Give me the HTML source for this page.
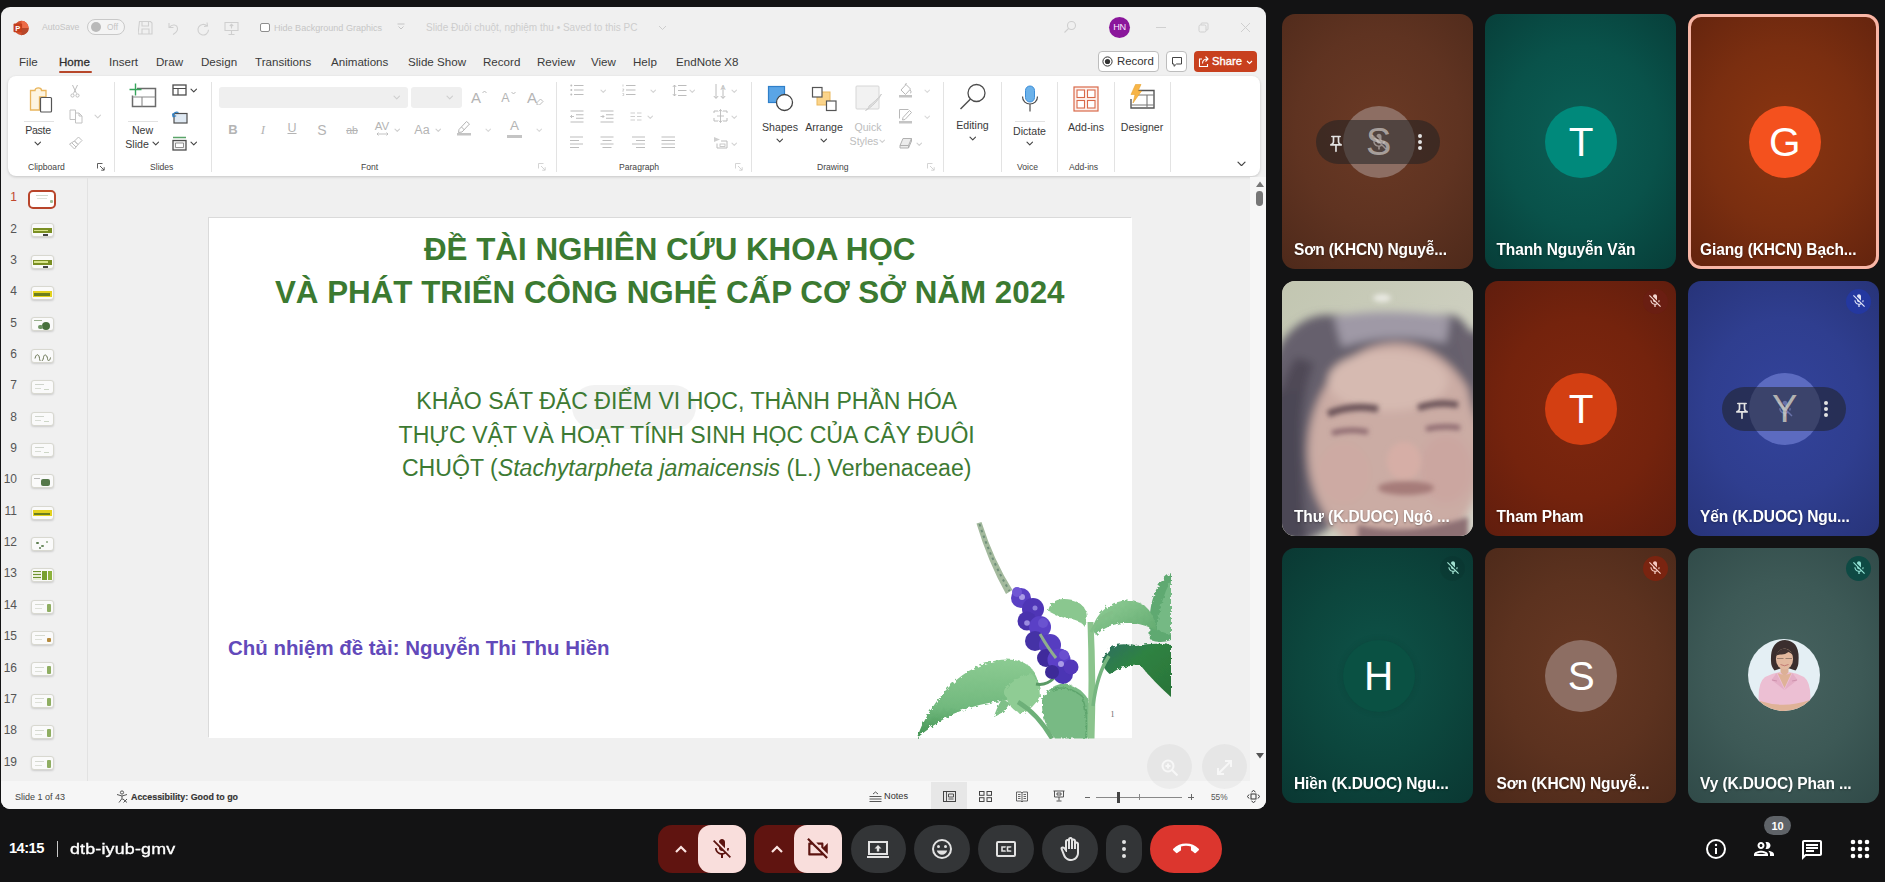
<!DOCTYPE html>
<html lang="vi"><head><meta charset="utf-8"><title>Meet</title>
<style>
*{box-sizing:border-box;margin:0;padding:0}
html,body{width:1885px;height:882px;overflow:hidden;background:#131314;font-family:"Liberation Sans",sans-serif}
.abs,.abs *{position:absolute}
#root{position:absolute;left:0;top:0;width:1885px;height:882px;overflow:hidden}
#root div,#root span,#root svg{position:absolute}
.t{white-space:nowrap;line-height:1}
#ppt{left:1px;top:7px;width:1265px;height:802px;background:#f0f0f0;border-radius:9px;overflow:hidden}
.tab{font-size:11.6px;color:#3a3a3a;top:49px;white-space:nowrap;line-height:1}
.gl{font-size:8.6px;color:#444;top:155.5px;white-space:nowrap;line-height:1}
.sep{width:1px;top:75px;height:90px;background:#e3e3e3}
.lbl{font-size:10.6px;color:#3a3a3a;white-space:nowrap;line-height:1;text-align:center}
.dis{color:#bdbdbd}
.tile{width:191.2px;height:255px;border-radius:13px;overflow:hidden}
.nm{left:12px;top:226.3px;transform:scaleY(1.12);transform-origin:0 0;font-size:15.5px;font-weight:bold;color:#fff;white-space:nowrap;line-height:1;text-shadow:0 1px 2px rgba(0,0,0,.35);letter-spacing:-0.1px}
.av{left:60.7px;top:92px;width:72px;height:72px;border-radius:50%}
.avl{left:0;top:0;width:72px;height:72px;line-height:73px;text-align:center;color:#fff;font-size:40.5px}
.num{font-size:12px;color:#555;width:20px;text-align:right;left:-4px;line-height:1}
.th{left:30px;width:23px;height:14px;border-radius:3px;background:#fafafa;border:1px solid #d8d8d0;overflow:hidden;box-shadow:0 1px 2px rgba(0,0,0,.15)}
.mb{top:825px;height:48px;border-radius:24px;background:#333537}
</style></head><body><div id="root">
<div id="ppt">
<svg style="left:11px;top:12px" width="18" height="18" viewBox="0 0 18 18"><circle cx="9.5" cy="9" r="7.2" fill="#d35230"/><path d="M9.5 1.8a7.2 7.2 0 0 1 7.2 7.2H9.5z" fill="#ed6c47"/><path d="M9.5 16.2A7.2 7.2 0 0 0 16.7 9H9.5z" fill="#b7472a"/><rect x="1.5" y="4.6" width="8.6" height="8.6" rx="1" fill="#c43e1c"/><text x="5.8" y="11.6" font-family="Liberation Sans,sans-serif" font-size="7.5" font-weight="bold" fill="#fff" text-anchor="middle">P</text></svg>
<span class="t" style="left:41px;top:16px;font-size:8.6px;color:#c4c4c4">AutoSave</span>
<div style="left:86px;top:12px;width:38px;height:16px;border:1px solid #c9c9c9;border-radius:8px;background:#f4f4f4"></div>
<div style="left:90px;top:15px;width:10px;height:10px;border-radius:5px;background:#b9b9b9"></div>
<span class="t" style="left:106px;top:16px;font-size:8.4px;color:#c4c4c4">Off</span>
<svg style="left:137px;top:12px" width="110" height="18" viewBox="0 0 110 18" fill="none" stroke="#cfcfcf" stroke-width="1.1">
 <path d="M1.5 2.5h11l1.5 1.5v11h-14z M4 2.5v4.5h6.5v-4.5 M4 15v-5h7v5"/>
 <path d="M31 4v4.5h4.5 M31.5 8.5c2-3.5 8-3.5 8 1.5 0 2.5-2 4-4.5 5.5"/>
 <path d="M69 3.5l0.5 3.5-3.5 0.5 M69 7a5.3 5.3 0 1 0 1.5 3.8"/>
 <path d="M87 3.5h13v8h-13z M93.5 11.5v3.5 M90.5 15.5h6 M93.5 5.5v4 M91.8 7l1.7-1.7 1.7 1.7"/>
</svg>
<div style="left:259px;top:15.5px;width:9.5px;height:9.5px;border:1px solid #8e8e8e;border-radius:2px;background:#fff"></div>
<span class="t" style="left:273px;top:16.5px;font-size:9.05px;color:#c6c6c6">Hide Background Graphics</span>
<svg style="left:395px;top:15px" width="10" height="10" viewBox="0 0 10 10" fill="none" stroke="#c4c4c4" stroke-width="1"><path d="M1.5 2h7 M2.5 4.5l2.5 2.5 2.5-2.5"/></svg>
<span class="t" style="left:425px;top:15.5px;font-size:10px;color:#cdcdcd">Slide Đuôi chuột, nghiệm thu • Saved to this PC</span>
<svg style="left:657px;top:17px" width="9" height="8" viewBox="0 0 9 8" fill="none" stroke="#cdcdcd" stroke-width="1"><path d="M1 2l3.5 3.5 3.5-3.5"/></svg>
<svg style="left:1062px;top:13px" width="14" height="14" viewBox="0 0 14 14" fill="none" stroke="#cfcfcf" stroke-width="1.1"><circle cx="8.5" cy="5.5" r="4"/><path d="M5.5 8.5l-4 4"/></svg>
<div style="left:1108px;top:10px;width:21px;height:21px;border-radius:50%;background:#8a169b"></div>
<span class="t" style="left:1108px;top:16px;width:21px;text-align:center;font-size:9.2px;color:#fbe9ff;letter-spacing:-.3px">HN</span>
<div style="left:1155px;top:20px;width:10px;height:1px;background:#d0d0d0"></div>
<svg style="left:1197px;top:15px" width="11" height="11" viewBox="0 0 11 11" fill="none" stroke="#d0d0d0" stroke-width="1"><rect x="1" y="3" width="7" height="7" rx="1.5"/><path d="M3 3v-1a1 1 0 0 1 1-1h5a1 1 0 0 1 1 1v5a1 1 0 0 1-1 1h-1"/></svg>
<svg style="left:1239px;top:15px" width="11" height="11" viewBox="0 0 11 11" fill="none" stroke="#cfcfcf" stroke-width="1"><path d="M1 1l9 9 M10 1l-9 9"/></svg>
<span class="tab" style="left:18px">File</span><span class="tab" style="left:58px;-webkit-text-stroke:.3px #333;color:#2a2a2a">Home</span><span class="tab" style="left:108px">Insert</span><span class="tab" style="left:155px">Draw</span><span class="tab" style="left:200px">Design</span><span class="tab" style="left:254px">Transitions</span><span class="tab" style="left:330px">Animations</span><span class="tab" style="left:407px">Slide Show</span><span class="tab" style="left:482px">Record</span><span class="tab" style="left:536px">Review</span><span class="tab" style="left:590px">View</span><span class="tab" style="left:632px">Help</span><span class="tab" style="left:675px">EndNote X8</span><div style="left:58px;top:64px;width:33px;height:2px;background:#b7472a;border-radius:1px"></div>
<div style="left:1097px;top:44px;width:61px;height:21px;border:1px solid #bdbdbd;border-radius:4px;background:#fff"></div>
<svg style="left:1101px;top:49px" width="11" height="11" viewBox="0 0 11 11"><circle cx="5.5" cy="5.5" r="4.6" fill="none" stroke="#333" stroke-width="1"/><circle cx="5.5" cy="5.5" r="2.6" fill="#333"/></svg>
<span class="t" style="left:1116px;top:49px;font-size:11.4px;color:#333">Record</span>
<div style="left:1165px;top:44px;width:21px;height:21px;border:1px solid #bdbdbd;border-radius:4px;background:#fff"></div>
<svg style="left:1170px;top:49px" width="12" height="12" viewBox="0 0 12 12" fill="none" stroke="#444" stroke-width="1"><path d="M1.5 1.5h9v6.5h-5l-2.5 2.3v-2.3h-1.5z"/></svg>
<div style="left:1193px;top:44px;width:63px;height:21px;border-radius:4px;background:#c8401e"></div>
<svg style="left:1197px;top:48px" width="12" height="13" viewBox="0 0 12 13" fill="none" stroke="#fff" stroke-width="1.1"><path d="M4 4h-2.5v7.5h8v-2.5 M4.5 8.5c0-3 2-4.5 5-4.5 M7.5 1.5l2.5 2.5-2.5 2.5"/></svg>
<span class="t" style="left:1211px;top:49px;font-size:11.2px;color:#fff;-webkit-text-stroke:.35px #fff">Share</span>
<svg style="left:1245px;top:52.5px" width="7" height="5" viewBox="0 0 7 5" fill="none" stroke="#fff" stroke-width="1.1"><path d="M1 1l2.5 2.5 2.5-2.5"/></svg>
<div style="left:7px;top:69px;width:1252px;height:100px;background:#fff;border-radius:8px;box-shadow:0 1px 3px rgba(0,0,0,.18)"></div><div class="sep" style="left:112.5px"></div><div class="sep" style="left:210px"></div><div class="sep" style="left:555px"></div><div class="sep" style="left:750px"></div><div class="sep" style="left:942px"></div><div class="sep" style="left:999.5px"></div><div class="sep" style="left:1056px"></div><div class="sep" style="left:1112.5px"></div><div class="sep" style="left:1169px"></div><span class="gl" style="left:27px">Clipboard</span><span class="gl" style="left:149px">Slides</span><span class="gl" style="left:360px">Font</span><span class="gl" style="left:618px">Paragraph</span><span class="gl" style="left:816px">Drawing</span><span class="gl" style="left:1016px">Voice</span><span class="gl" style="left:1068px">Add-ins</span><svg style="left:26.5px;top:78.5px" width="26" height="28" viewBox="0 0 26 28" ><path d="M2.5 4.5h4.5c0-3.5 6.5-3.5 6.5 0h4.5v6.5h-6.5v13h-9z" fill="#fdf4e0" stroke="#e9b55c" stroke-width="1.3"/><rect x="12.5" y="11.5" width="11" height="14.5" rx="1" fill="#fff" stroke="#555" stroke-width="1.2"/></svg><div style="left:23px;top:113.5px;width:30px;height:1px;background:#e2e2e2"></div><span class="lbl" style="left:-23px;top:118px;width:120px;letter-spacing:-.35px">Paste</span><svg style="left:33.2px;top:133.9px" width="7.5" height="5.15" viewBox="0 0 7.5 5.15" ><path d="M1 1.2l2.75 2.75 2.75 -2.75" fill="none" stroke="#444" stroke-width="1.1" stroke-linecap="round" stroke-linejoin="round"/></svg><svg style="left:69px;top:77px" width="10" height="14" viewBox="0 0 10 14" ><path d="M2.5 1l4 8.5 M7.5 1l-4 8.5" fill="none" stroke="#bdbdbd" stroke-width="1"/><circle cx="2.5" cy="11.5" r="1.6" fill="none" stroke="#bdbdbd"/><circle cx="7.5" cy="11.5" r="1.6" fill="none" stroke="#bdbdbd"/></svg><svg style="left:67.5px;top:102px" width="14" height="15" viewBox="0 0 14 15" ><path d="M1 1h5.5v9.5h-5.5z M6.5 4h3.5l3 3v7h-6.5z M10 4v3h3" fill="none" stroke="#c2c2c2" stroke-width="1"/></svg><svg style="left:93.2px;top:106.9px" width="7.5" height="5.15" viewBox="0 0 7.5 5.15" ><path d="M1 1.2l2.75 2.75 2.75 -2.75" fill="none" stroke="#d0d0d0" stroke-width="1.1" stroke-linecap="round" stroke-linejoin="round"/></svg><svg style="left:68px;top:129px" width="14" height="14" viewBox="0 0 14 14" ><path d="M9.5 1l3.5 3.5-4 4-3.5-3.5z M5.5 5l3.5 3.5-3.5 4.5-5-5z M3 7l4 4" fill="none" stroke="#bdbdbd" stroke-width="1"/></svg><svg style="left:95.5px;top:156px" width="8" height="8" viewBox="0 0 8 8" ><path d="M.5 5.5v-5h5 M3 3l4 4 M7.2 4.2v3h-3" fill="none" stroke="#4d4d4d" stroke-width=".9"/></svg><svg style="left:127.5px;top:76px" width="28" height="27" viewBox="0 0 28 27" ><path d="M8 5.5h18.5v18h-23v-11" fill="none" stroke="#6b6b6b" stroke-width="1.5"/><path d="M3.5 14h23 M13 14v9.5" fill="none" stroke="#8a8a8a" stroke-width="1.1"/><path d="M6.5 0.5v12 M0.5 6.5h12" stroke="#35a35a" stroke-width="1.4"/></svg><div style="left:127px;top:113.5px;width:30px;height:1px;background:#e2e2e2"></div><span class="lbl" style="left:81.5px;top:118px;width:120px;">New</span><span class="lbl" style="left:76px;top:132px;width:120px;">Slide</span><svg style="left:150.8px;top:133.9px" width="7.5" height="5.15" viewBox="0 0 7.5 5.15" ><path d="M1 1.2l2.75 2.75 2.75 -2.75" fill="none" stroke="#444" stroke-width="1.1" stroke-linecap="round" stroke-linejoin="round"/></svg><svg style="left:171px;top:77px" width="15" height="12" viewBox="0 0 15 12" ><rect x="1" y="1" width="13" height="10" fill="#fff" stroke="#4d4d4d" stroke-width="1.3"/><path d="M1 4.5h13 M6 4.5v6.5" stroke="#4d4d4d" stroke-width="1.1"/></svg><svg style="left:188.8px;top:81.4px" width="7.5" height="5.15" viewBox="0 0 7.5 5.15" ><path d="M1 1.2l2.75 2.75 2.75 -2.75" fill="none" stroke="#444" stroke-width="1.1" stroke-linecap="round" stroke-linejoin="round"/></svg><svg style="left:170.5px;top:102.5px" width="16" height="14" viewBox="0 0 16 14" ><rect x="2" y="3.5" width="13" height="9.5" fill="#dfe9f3" stroke="#4d4d4d" stroke-width="1.2"/><path d="M1 6.5c0-3.5 3-5 5.5-4" fill="none" stroke="#2f7fc4" stroke-width="1.3"/><path d="M0.5 3.5l0.7 3.3 3-1" fill="none" stroke="#2f7fc4" stroke-width="1.1"/></svg><svg style="left:171px;top:128.5px" width="15" height="15" viewBox="0 0 15 15" ><path d="M1 1.5h13" stroke="#5aa469" stroke-width="1.6"/><rect x="1" y="4.5" width="13" height="9.5" fill="#f2f2f2" stroke="#4d4d4d" stroke-width="1.3"/><path d="M3.5 7h8v4.5h-8z" fill="#fff" stroke="#777" stroke-width=".8"/></svg><svg style="left:188.8px;top:134.4px" width="7.5" height="5.15" viewBox="0 0 7.5 5.15" ><path d="M1 1.2l2.75 2.75 2.75 -2.75" fill="none" stroke="#444" stroke-width="1.1" stroke-linecap="round" stroke-linejoin="round"/></svg><div style="left:218px;top:80px;width:189px;height:21px;background:#efefef;border-radius:3px"></div><div style="left:410px;top:80px;width:51px;height:21px;background:#efefef;border-radius:3px"></div><svg style="left:392.2px;top:87.9px" width="7.5" height="5.15" viewBox="0 0 7.5 5.15" ><path d="M1 1.2l2.75 2.75 2.75 -2.75" fill="none" stroke="#cfcfcf" stroke-width="1.1" stroke-linecap="round" stroke-linejoin="round"/></svg><svg style="left:445.2px;top:87.9px" width="7.5" height="5.15" viewBox="0 0 7.5 5.15" ><path d="M1 1.2l2.75 2.75 2.75 -2.75" fill="none" stroke="#cfcfcf" stroke-width="1.1" stroke-linecap="round" stroke-linejoin="round"/></svg><span class="t" style="left:455px;top:82.5px;width:40px;text-align:center;font-size:15px;color:#b4b4b4;">A</span><svg style="left:481px;top:82.5px" width="5" height="4" viewBox="0 0 5 4" ><path d="M.5 3l2-2 2 2" fill="none" stroke="#b4b4b4" stroke-width=".9"/></svg><span class="t" style="left:484.5px;top:84.8px;width:40px;text-align:center;font-size:12.5px;color:#b4b4b4;">A</span><svg style="left:509.5px;top:83.5px" width="5" height="4" viewBox="0 0 5 4" ><path d="M.5 1l2 2 2-2" fill="none" stroke="#b4b4b4" stroke-width=".9"/></svg><span class="t" style="left:511px;top:82.5px;width:40px;text-align:center;font-size:15px;color:#b4b4b4;">A</span><svg style="left:535px;top:90.5px" width="8" height="7" viewBox="0 0 8 7" ><path d="M1 4.5l3.5-3.5 2.5 2.5-3.5 3.5h-2.5z" fill="none" stroke="#b4b4b4" stroke-width=".9"/></svg><span class="t" style="left:212px;top:115.5px;width:40px;text-align:center;font-size:13px;color:#b4b4b4;font-weight:bold">B</span><span class="t" style="left:242px;top:115.5px;width:40px;text-align:center;font-size:13px;color:#b4b4b4;font-style:italic;font-family:'Liberation Serif',serif">I</span><span class="t" style="left:271px;top:115.2px;width:40px;text-align:center;font-size:12.5px;color:#b4b4b4;text-decoration:underline">U</span><span class="t" style="left:301px;top:115.5px;width:40px;text-align:center;font-size:14px;color:#b4b4b4;">S</span><span class="t" style="left:331px;top:117.8px;width:40px;text-align:center;font-size:10.5px;color:#b4b4b4;text-decoration:line-through">ab</span><span class="t" style="left:361px;top:113.8px;width:40px;text-align:center;font-size:11.5px;color:#b4b4b4;">AV</span><svg style="left:374.5px;top:125px" width="13" height="4" viewBox="0 0 13 4" ><path d="M1 2h11 M2.5 .5l-1.5 1.5 1.5 1.5 M10.5 .5l1.5 1.5-1.5 1.5" fill="none" stroke="#b4b4b4" stroke-width=".8"/></svg><svg style="left:393.2px;top:120.7px" width="6.5" height="4.65" viewBox="0 0 6.5 4.65" ><path d="M1 1.2l2.25 2.25 2.25 -2.25" fill="none" stroke="#cfcfcf" stroke-width="1.1" stroke-linecap="round" stroke-linejoin="round"/></svg><span class="t" style="left:401px;top:116.8px;width:40px;text-align:center;font-size:12.5px;color:#b4b4b4;">Aa</span><svg style="left:433.8px;top:120.7px" width="6.5" height="4.65" viewBox="0 0 6.5 4.65" ><path d="M1 1.2l2.25 2.25 2.25 -2.25" fill="none" stroke="#cfcfcf" stroke-width="1.1" stroke-linecap="round" stroke-linejoin="round"/></svg><svg style="left:455px;top:112px" width="16" height="17" viewBox="0 0 16 17" ><path d="M3 10.5l7.5-8 3 2.5-7.5 8-3.5.5z M5.5 8l3 3" fill="none" stroke="#b4b4b4" stroke-width="1"/><rect x="1" y="14" width="14" height="2.5" fill="#c4c4c4"/></svg><svg style="left:483.8px;top:120.7px" width="6.5" height="4.65" viewBox="0 0 6.5 4.65" ><path d="M1 1.2l2.25 2.25 2.25 -2.25" fill="none" stroke="#d8d8d8" stroke-width="1.1" stroke-linecap="round" stroke-linejoin="round"/></svg><span class="t" style="left:493.5px;top:112.2px;width:40px;text-align:center;font-size:13.5px;color:#b4b4b4;">A</span><div style="left:506px;top:128px;width:15px;height:2.5px;background:#c4c4c4"></div><svg style="left:534.8px;top:120.7px" width="6.5" height="4.65" viewBox="0 0 6.5 4.65" ><path d="M1 1.2l2.25 2.25 2.25 -2.25" fill="none" stroke="#d8d8d8" stroke-width="1.1" stroke-linecap="round" stroke-linejoin="round"/></svg><svg style="left:536.5px;top:156px" width="8" height="8" viewBox="0 0 8 8" ><path d="M.5 5.5v-5h5 M3 3l4 4 M7.2 4.2v3h-3" fill="none" stroke="#cfcfcf" stroke-width=".9"/></svg><svg style="left:569px;top:77px" width="14" height="12" viewBox="0 0 14 12" ><path d="M4 1.5h9.5 M4 6h9.5 M4 10.5h9.5" stroke="#bcbcbc" stroke-width="1.1"/><circle cx="1.3" cy="1.5" r="1" fill="#bcbcbc"/><circle cx="1.3" cy="6" r="1" fill="#bcbcbc"/><circle cx="1.3" cy="10.5" r="1" fill="#bcbcbc"/></svg><svg style="left:598.8px;top:81.7px" width="6.5" height="4.65" viewBox="0 0 6.5 4.65" ><path d="M1 1.2l2.25 2.25 2.25 -2.25" fill="none" stroke="#d4d4d4" stroke-width="1.1" stroke-linecap="round" stroke-linejoin="round"/></svg><svg style="left:621px;top:77px" width="14" height="12" viewBox="0 0 14 12" ><path d="M4 1.5h9.5 M4 6h9.5 M4 10.5h9.5" stroke="#bcbcbc" stroke-width="1.1"/><path d="M1 .5v2 M.5 5h1.2v1l-1.2 1h1.4 M.5 9.5h1.2v2h-1.2" fill="none" stroke="#bcbcbc" stroke-width=".7"/></svg><svg style="left:648.8px;top:81.7px" width="6.5" height="4.65" viewBox="0 0 6.5 4.65" ><path d="M1 1.2l2.25 2.25 2.25 -2.25" fill="none" stroke="#d4d4d4" stroke-width="1.1" stroke-linecap="round" stroke-linejoin="round"/></svg><svg style="left:670.5px;top:76.5px" width="15" height="13" viewBox="0 0 15 13" ><path d="M6 1.5h8.5 M6 6.5h8.5 M6 11.5h8.5" stroke="#bcbcbc" stroke-width="1.1"/><path d="M2.5 1v11 M.8 3l1.7-2 1.7 2 M.8 10l1.7 2 1.7-2" fill="none" stroke="#bcbcbc" stroke-width=".9"/></svg><svg style="left:688.2px;top:81.7px" width="6.5" height="4.65" viewBox="0 0 6.5 4.65" ><path d="M1 1.2l2.25 2.25 2.25 -2.25" fill="none" stroke="#d4d4d4" stroke-width="1.1" stroke-linecap="round" stroke-linejoin="round"/></svg><svg style="left:712px;top:75.5px" width="14" height="17" viewBox="0 0 14 17" ><path d="M3 1v14 M.8 13l2.2 2.5 2.2-2.5 M10 3v12 M7.8 13l2.2 2.5 2.2-2.5" fill="none" stroke="#bcbcbc" stroke-width="1"/><text x="10" y="7" font-size="7.5" font-family="Liberation Sans,sans-serif" fill="#bcbcbc" text-anchor="middle">A</text></svg><svg style="left:729.8px;top:81.7px" width="6.5" height="4.65" viewBox="0 0 6.5 4.65" ><path d="M1 1.2l2.25 2.25 2.25 -2.25" fill="none" stroke="#d4d4d4" stroke-width="1.1" stroke-linecap="round" stroke-linejoin="round"/></svg><svg style="left:569px;top:102.5px" width="14" height="13" viewBox="0 0 14 13" ><path d="M.5 1h13 M6 4.7h7.5 M6 8.3h7.5 M.5 12h13" stroke="#bcbcbc" stroke-width="1.1"/><path d="M4 6.5h-3.5 M2 5l-1.5 1.5 1.5 1.5" fill="none" stroke="#bcbcbc" stroke-width=".9"/></svg><svg style="left:599px;top:102.5px" width="14" height="13" viewBox="0 0 14 13" ><path d="M.5 1h13 M6 4.7h7.5 M6 8.3h7.5 M.5 12h13" stroke="#bcbcbc" stroke-width="1.1"/><path d="M.5 6.5h3.5 M2.5 5l1.5 1.5-1.5 1.5" fill="none" stroke="#bcbcbc" stroke-width=".9"/></svg><svg style="left:629px;top:104.5px" width="12" height="9" viewBox="0 0 12 9" ><path d="M.5 1h4.5 M.5 4.5h4.5 M.5 8h4.5 M7 1h4.5 M7 4.5h4.5 M7 8h4.5" stroke="#cfcfcf" stroke-width="1"/></svg><svg style="left:645.8px;top:107.7px" width="6.5" height="4.65" viewBox="0 0 6.5 4.65" ><path d="M1 1.2l2.25 2.25 2.25 -2.25" fill="none" stroke="#d4d4d4" stroke-width="1.1" stroke-linecap="round" stroke-linejoin="round"/></svg><svg style="left:711.5px;top:102px" width="15" height="14" viewBox="0 0 15 14" ><path d="M1 4v-2h4 M10 2h4v2 M1 9v3h4 M10 12h4v-3" fill="none" stroke="#bcbcbc" stroke-width="1"/><path d="M7.5 .5v13 M5.8 2.5l1.7-2 1.7 2 M5.8 11.5l1.7 2 1.7-2 M4 7h7" fill="none" stroke="#bcbcbc" stroke-width=".9"/></svg><svg style="left:729.8px;top:107.7px" width="6.5" height="4.65" viewBox="0 0 6.5 4.65" ><path d="M1 1.2l2.25 2.25 2.25 -2.25" fill="none" stroke="#d4d4d4" stroke-width="1.1" stroke-linecap="round" stroke-linejoin="round"/></svg><svg style="left:568.5px;top:129.2px" width="15" height="12.5" viewBox="0 0 15 12.5" ><path d="M0 1H13M0 4.5H9M0 8H13M0 11.5H9" fill="none" stroke="#bdbdbd" stroke-width="1.1"/></svg><svg style="left:598.5px;top:129.2px" width="15" height="12.5" viewBox="0 0 15 12.5" ><path d="M0.5 1H13.5M2.5 4.5H11.5M0.5 8H13.5M2.5 11.5H11.5" fill="none" stroke="#bdbdbd" stroke-width="1.1"/></svg><svg style="left:629.5px;top:129.2px" width="15" height="12.5" viewBox="0 0 15 12.5" ><path d="M1 1H14M5 4.5H14M1 8H14M5 11.5H14" fill="none" stroke="#bdbdbd" stroke-width="1.1"/></svg><svg style="left:659.5px;top:129.2px" width="15" height="12.5" viewBox="0 0 15 12.5" ><path d="M0.5 1H14M0.5 4.5H14M0.5 8H14M0.5 11.5H14" fill="none" stroke="#bdbdbd" stroke-width="1.1"/></svg><svg style="left:711.5px;top:129px" width="15" height="13" viewBox="0 0 15 13" ><path d="M1 1l6 2.5-6 2.5z" fill="#cfcfcf"/><path d="M4 7.5v4.5h10v-7h-6" fill="none" stroke="#bcbcbc" stroke-width="1"/><rect x="7" y="8" width="5" height="2.5" fill="none" stroke="#bcbcbc" stroke-width=".8"/></svg><svg style="left:729.8px;top:134.7px" width="6.5" height="4.65" viewBox="0 0 6.5 4.65" ><path d="M1 1.2l2.25 2.25 2.25 -2.25" fill="none" stroke="#d4d4d4" stroke-width="1.1" stroke-linecap="round" stroke-linejoin="round"/></svg><svg style="left:733.5px;top:156px" width="8" height="8" viewBox="0 0 8 8" ><path d="M.5 5.5v-5h5 M3 3l4 4 M7.2 4.2v3h-3" fill="none" stroke="#cfcfcf" stroke-width=".9"/></svg><svg style="left:766px;top:77.5px" width="27" height="27" viewBox="0 0 27 27" ><rect x="1.5" y="1.5" width="16" height="16" fill="#5aa5e6" stroke="#2f7fc9" stroke-width="1.2"/><circle cx="17.5" cy="17.5" r="8" fill="#fff" stroke="#444" stroke-width="1.3"/></svg><span class="lbl" style="left:719px;top:114.5px;width:120px;">Shapes</span><svg style="left:775.2px;top:130.9px" width="7.5" height="5.15" viewBox="0 0 7.5 5.15" ><path d="M1 1.2l2.75 2.75 2.75 -2.75" fill="none" stroke="#444" stroke-width="1.1" stroke-linecap="round" stroke-linejoin="round"/></svg><svg style="left:809.5px;top:78.5px" width="27" height="26" viewBox="0 0 27 26" ><rect x="6" y="6" width="13" height="13" fill="#fbd48a" stroke="#eab75c" stroke-width="1"/><rect x="1.5" y="1.5" width="9.5" height="9.5" fill="#fff" stroke="#555" stroke-width="1.2"/><rect x="15.5" y="15" width="9.5" height="9.5" fill="#fff" stroke="#555" stroke-width="1.2"/></svg><span class="lbl" style="left:763px;top:114.5px;width:120px;">Arrange</span><svg style="left:819.2px;top:130.9px" width="7.5" height="5.15" viewBox="0 0 7.5 5.15" ><path d="M1 1.2l2.75 2.75 2.75 -2.75" fill="none" stroke="#444" stroke-width="1.1" stroke-linecap="round" stroke-linejoin="round"/></svg><svg style="left:854px;top:78px" width="28" height="27" viewBox="0 0 28 27" ><rect x="1" y="1" width="23" height="23" rx="1" fill="#f2f2f2" stroke="#d6d6d6" stroke-width="1"/><path d="M26.5 9c-3 6-8 11-12 14l-4 2.5c2-1 3-2.5 3.5-4.5 4-3 9-7.5 12.5-12z" fill="#e0e0e0" stroke="#c8c8c8" stroke-width=".8"/></svg><span class="lbl dis" style="left:807px;top:114.5px;width:120px;">Quick</span><span class="lbl dis" style="left:803px;top:129px;width:120px;">Styles</span><svg style="left:877.8px;top:131.7px" width="6.5" height="4.65" viewBox="0 0 6.5 4.65" ><path d="M1 1.2l2.25 2.25 2.25 -2.25" fill="none" stroke="#d0d0d0" stroke-width="1.1" stroke-linecap="round" stroke-linejoin="round"/></svg><svg style="left:897px;top:75px" width="15" height="16" viewBox="0 0 15 16" ><path d="M3 8l5-5.5 4.5 4.5-5 5.5z M8.5 1l-1.5 2 M12 8c1.5 1.5 1.5 3 0 3" fill="none" stroke="#b8b8b8" stroke-width="1"/><rect x="1" y="13" width="13" height="2.5" fill="#c4c4c4"/></svg><svg style="left:922.8px;top:81.7px" width="6.5" height="4.65" viewBox="0 0 6.5 4.65" ><path d="M1 1.2l2.25 2.25 2.25 -2.25" fill="none" stroke="#dadada" stroke-width="1.1" stroke-linecap="round" stroke-linejoin="round"/></svg><svg style="left:897px;top:101px" width="15" height="16" viewBox="0 0 15 16" ><path d="M1.5 10.5v-9h9 M5 9.5l6.5-7 2 2-6.5 7-2.5.500z" fill="none" stroke="#b8b8b8" stroke-width="1"/><rect x="1" y="13" width="13" height="2.5" fill="#c4c4c4"/></svg><svg style="left:922.8px;top:107.7px" width="6.5" height="4.65" viewBox="0 0 6.5 4.65" ><path d="M1 1.2l2.25 2.25 2.25 -2.25" fill="none" stroke="#dadada" stroke-width="1.1" stroke-linecap="round" stroke-linejoin="round"/></svg><svg style="left:896.5px;top:129.5px" width="15" height="13" viewBox="0 0 15 13" ><path d="M5 1.5h8.5l-3 7h-8.5z M2 8.5v2.5h8.5v-2.5 M10.5 11l3-7v-2.5" fill="#ececec" stroke="#b0b0b0" stroke-width="1" stroke-linejoin="round"/></svg><svg style="left:915.2px;top:134.7px" width="6.5" height="4.65" viewBox="0 0 6.5 4.65" ><path d="M1 1.2l2.25 2.25 2.25 -2.25" fill="none" stroke="#d0d0d0" stroke-width="1.1" stroke-linecap="round" stroke-linejoin="round"/></svg><svg style="left:925.5px;top:156px" width="8" height="8" viewBox="0 0 8 8" ><path d="M.5 5.5v-5h5 M3 3l4 4 M7.2 4.2v3h-3" fill="none" stroke="#cfcfcf" stroke-width=".9"/></svg><svg style="left:957.5px;top:75.5px" width="28" height="28" viewBox="0 0 28 28" ><circle cx="17.5" cy="10" r="8.5" fill="none" stroke="#4d4d4d" stroke-width="1.3"/><path d="M11.5 16l-10 10" stroke="#4d4d4d" stroke-width="1.5"/></svg><span class="lbl" style="left:911.5px;top:113px;width:120px;">Editing</span><svg style="left:967.8px;top:128.9px" width="7.5" height="5.15" viewBox="0 0 7.5 5.15" ><path d="M1 1.2l2.75 2.75 2.75 -2.75" fill="none" stroke="#444" stroke-width="1.1" stroke-linecap="round" stroke-linejoin="round"/></svg><svg style="left:1019.5px;top:77.5px" width="18" height="28" viewBox="0 0 18 28" ><rect x="4.5" y="1" width="9" height="16" rx="4.5" fill="#6cb2ea" stroke="#3d8ed8" stroke-width="1"/><path d="M1.5 11.5c0 10 15 10 15 0 M9 19v7.5" fill="none" stroke="#4d4d4d" stroke-width="1.2"/></svg><div style="left:1014px;top:113.5px;width:30px;height:1px;background:#e2e2e2"></div><span class="lbl" style="left:968.5px;top:118.5px;width:120px;">Dictate</span><svg style="left:1024.8px;top:133.9px" width="7.5" height="5.15" viewBox="0 0 7.5 5.15" ><path d="M1 1.2l2.75 2.75 2.75 -2.75" fill="none" stroke="#444" stroke-width="1.1" stroke-linecap="round" stroke-linejoin="round"/></svg><svg style="left:1071.5px;top:78.5px" width="26" height="26" viewBox="0 0 26 26" ><rect x="1" y="1" width="24" height="24" fill="#fdf1ed" stroke="#d9694a" stroke-width="1.2"/><g fill="#fff" stroke="#d9694a" stroke-width="1.1"><rect x="4" y="4" width="7.5" height="7.5"/><rect x="14.5" y="4" width="7.5" height="7.5"/><rect x="4" y="14.5" width="7.5" height="7.5"/><rect x="14.5" y="14.5" width="7.5" height="7.5"/></g></svg><span class="lbl" style="left:1025px;top:115px;width:120px;">Add-ins</span><svg style="left:1127px;top:77px" width="28" height="26" viewBox="0 0 28 26" ><path d="M9 6.5h17v17.5h-23v-9" fill="#fff" stroke="#555" stroke-width="1.4"/><path d="M9.5 11h16.5 M19 11v12.5 M3 21h23" fill="none" stroke="#777" stroke-width="1.1"/><path d="M7.5 .5h5.5l-3 6.5h3.5l-8.5 12 2-8.5h-4z" fill="#f7b548" stroke="#eaa22d" stroke-width=".6"/></svg><span class="lbl" style="left:1081px;top:115px;width:120px;">Designer</span><svg style="left:1236px;top:153.6px" width="9" height="5.9" viewBox="0 0 9 5.9" ><path d="M1 1.2l3.5 3.5 3.5 -3.5" fill="none" stroke="#444" stroke-width="1.2" stroke-linecap="round" stroke-linejoin="round"/></svg><div style="left:86px;top:170px;width:1px;height:604px;background:#e2e2e2"></div><span class="num" style="top:184.2px;color:#c1462c">1</span><div style="left:27px;top:183px;width:28px;height:18.5px;border-radius:5px;border:2px solid #b8452b;background:#fff"></div><div style="left:35px;top:188px;width:12px;height:1px;background:#cfd8cc"></div><div style="left:36px;top:191px;width:10px;height:1px;background:#dfe4dc"></div><div style="left:49px;top:193px;width:3px;height:3px;background:#9fbf96;border-radius:1px"></div><span class="num" style="top:215.5px;color:#555">2</span><div class="th" style="top:216.3px"><div style="left:1px;top:4px;width:19px;height:5px;background:#7a8f23"></div><div style="left:2px;top:5.5px;width:14px;height:1.5px;background:#d9e48a"></div><div style="left:11px;top:10px;width:5px;height:2px;background:#444"></div></div><span class="num" style="top:246.9px;color:#555">3</span><div class="th" style="top:247.7px"><div style="left:1px;top:4px;width:19px;height:5px;background:#7a8f23"></div><div style="left:2px;top:5.5px;width:14px;height:1.5px;background:#d9e48a"></div><div style="left:11px;top:10px;width:5px;height:2px;background:#444"></div></div><span class="num" style="top:278.2px;color:#555">4</span><div class="th" style="top:279.1px"><div style="left:1px;top:3.5px;width:19px;height:6px;background:#e3d21f"></div><div style="left:2px;top:6px;width:16px;height:2.5px;background:#6b7f1e"></div></div><span class="num" style="top:309.6px;color:#555">5</span><div class="th" style="top:310.4px"><div style="left:2px;top:2px;width:8px;height:1px;background:#9ab08f"></div><div style="left:10px;top:4px;width:8px;height:8px;border-radius:4px;background:#47703c"></div><div style="left:6px;top:7px;width:5px;height:4px;border-radius:2px;background:#6d9462"></div></div><span class="num" style="top:340.9px;color:#555">6</span><div class="th" style="top:341.8px"><svg style="left:2px;top:4px" width="18" height="7" viewBox="0 0 18 7"><path d="M1 4.5c1-5 4-5 4.5 0s3.5 3 4-1 3.5-3 4 1 2.5 2 3-1" fill="none" stroke="#66714f" stroke-width="1"/></svg></div><span class="num" style="top:372.3px;color:#555">7</span><div class="th" style="top:373.1px"><div style="left:3px;top:3px;width:9px;height:1px;background:#cfd4cc"></div><div style="left:3px;top:7px;width:6px;height:1px;background:#d8dcd4"></div><div style="left:12px;top:8px;width:5px;height:1px;background:#cdd6c6"></div></div><span class="num" style="top:403.7px;color:#555">8</span><div class="th" style="top:404.5px"><div style="left:3px;top:3px;width:9px;height:1px;background:#cfd4cc"></div><div style="left:3px;top:7px;width:6px;height:1px;background:#d8dcd4"></div><div style="left:12px;top:8px;width:5px;height:1px;background:#cdd6c6"></div></div><span class="num" style="top:435px;color:#555">9</span><div class="th" style="top:435.8px"><div style="left:3px;top:3px;width:9px;height:1px;background:#cfd4cc"></div><div style="left:3px;top:7px;width:6px;height:1px;background:#d8dcd4"></div><div style="left:12px;top:8px;width:5px;height:1px;background:#cdd6c6"></div></div><span class="num" style="top:466.4px;color:#555">10</span><div class="th" style="top:467.2px"><div style="left:9px;top:4px;width:9px;height:7px;border-radius:2px;background:#55784a"></div><div style="left:2px;top:3px;width:6px;height:1px;background:#bbb"></div></div><span class="num" style="top:497.7px;color:#555">11</span><div class="th" style="top:498.5px"><div style="left:1px;top:3.5px;width:19px;height:6px;background:#e3d21f"></div><div style="left:2px;top:6px;width:16px;height:2.5px;background:#6b7f1e"></div></div><span class="num" style="top:529.1px;color:#555">12</span><div class="th" style="top:529.9px"><div style="left:4px;top:4px;width:2.5px;height:2.5px;background:#5d7d50;border-radius:1px"></div><div style="left:9px;top:7px;width:2.5px;height:2.5px;background:#6d8d60;border-radius:1px"></div><div style="left:14px;top:3.5px;width:2px;height:2px;background:#8aa77e;border-radius:1px"></div><div style="left:7px;top:9.5px;width:2px;height:2px;background:#5d7d50;border-radius:1px"></div></div><span class="num" style="top:560.4px;color:#555">13</span><div class="th" style="top:561.2px"><div style="left:1px;top:2px;width:8px;height:9px;background:repeating-linear-gradient(#6f9431 0 1.5px,#e9efd8 1.5px 3px)"></div><div style="left:10px;top:2px;width:4.5px;height:9px;background:#78a02f"></div><div style="left:15.5px;top:2px;width:4.5px;height:9px;background:#8db23d"></div></div><span class="num" style="top:591.8px;color:#555">14</span><div class="th" style="top:592.5px"><div style="left:15px;top:3px;width:3.5px;height:8px;background:#8fae62;border-radius:1px"></div><div style="left:3px;top:3.5px;width:9px;height:1px;background:#d5d9d0"></div><div style="left:3px;top:7.5px;width:7px;height:1px;background:#dde0d8"></div></div><span class="num" style="top:623.1px;color:#555">15</span><div class="th" style="top:623.9px"><div style="left:15px;top:6px;width:3.5px;height:4.5px;background:#b58a3c;border-radius:1px"></div><div style="left:3px;top:3.5px;width:10px;height:1px;background:#d5d9d0"></div><div style="left:3px;top:7.5px;width:7px;height:1px;background:#dde0d8"></div></div><span class="num" style="top:654.5px;color:#555">16</span><div class="th" style="top:655.2px"><div style="left:15px;top:3px;width:3.5px;height:8px;background:#8fae62;border-radius:1px"></div><div style="left:3px;top:3.5px;width:9px;height:1px;background:#d5d9d0"></div><div style="left:3px;top:7.5px;width:7px;height:1px;background:#dde0d8"></div></div><span class="num" style="top:685.8px;color:#555">17</span><div class="th" style="top:686.6px"><div style="left:15px;top:3px;width:3.5px;height:8px;background:#8fae62;border-radius:1px"></div><div style="left:3px;top:3.5px;width:9px;height:1px;background:#d5d9d0"></div><div style="left:3px;top:7.5px;width:7px;height:1px;background:#dde0d8"></div></div><span class="num" style="top:717.2px;color:#555">18</span><div class="th" style="top:718px"><div style="left:15px;top:3px;width:3.5px;height:8px;background:#8fae62;border-radius:1px"></div><div style="left:3px;top:3.5px;width:9px;height:1px;background:#d5d9d0"></div><div style="left:3px;top:7.5px;width:7px;height:1px;background:#dde0d8"></div></div><span class="num" style="top:748.5px;color:#555">19</span><div class="th" style="top:749.3px"><div style="left:15px;top:3px;width:3.5px;height:8px;background:#8fae62;border-radius:1px"></div><div style="left:3px;top:3.5px;width:9px;height:1px;background:#d5d9d0"></div><div style="left:3px;top:7.5px;width:7px;height:1px;background:#dde0d8"></div></div><div id="slide" style="left:208px;top:211px;width:923px;height:520px;background:#fff;box-shadow:-1px -1px 0 #dadada;overflow:visible">
<div class="t" style="left:-0.8px;top:10px;width:923px;text-align:center;font-size:31.35px;font-weight:bold;color:#3b7a31;line-height:43px">ĐỀ TÀI NGHIÊN CỨU KHOA HỌC<br>VÀ PHÁT TRIỂN CÔNG NGHỆ CẤP CƠ SỞ NĂM 2024</div>
<div style="left:363px;top:167px;width:124px;height:44px;border-radius:22px;background:rgba(0,0,0,.05)"></div>
<div class="t" style="left:16.2px;top:167.4px;width:923px;text-align:center;font-size:23.1px;color:#3d7a33;line-height:33.25px">KHẢO SÁT ĐẶC ĐIỂM VI HỌC, THÀNH PHẦN HÓA<br>THỰC VẬT VÀ HOẠT TÍNH SINH HỌC CỦA CÂY ĐUÔI<br>CHUỘT (<i>Stachytarpheta jamaicensis</i> (L.) Verbenaceae)</div>
<div class="t" style="left:19px;top:420px;font-size:20.45px;font-weight:bold;color:#6249ba">Chủ nhiệm đề tài: Nguyễn Thi Thu Hiền</div>
<span class="t" style="left:901.5px;top:492.5px;font-size:8px;color:#666;font-family:'Liberation Serif',serif">1</span>
<svg style="left:701px;top:297px" width="262" height="224" viewBox="910 515 262 224">
<defs><filter id="rg" x="-5%" y="-5%" width="110%" height="110%"><feTurbulence type="fractalNoise" baseFrequency=".28" numOctaves="2" seed="4" result="n"/><feDisplacementMap in="SourceGraphic" in2="n" scale="4.5"/></filter>
<filter id="sb"><feGaussianBlur stdDeviation=".7"/></filter>
<linearGradient id="lg1" x1="0" y1="0" x2="0" y2="1"><stop offset="0" stop-color="#8ccb92"/><stop offset=".6" stop-color="#72b97e"/><stop offset="1" stop-color="#3f9150"/></linearGradient>
<linearGradient id="lg2" x1="0" y1="0" x2="1" y2="1"><stop offset="0" stop-color="#2c6f62"/><stop offset=".4" stop-color="#2f8242"/><stop offset="1" stop-color="#2a7438"/></linearGradient>
<linearGradient id="lg3" x1="0" y1="0" x2="1" y2="1"><stop offset="0" stop-color="#93cf98"/><stop offset="1" stop-color="#5fa86d"/></linearGradient></defs>
<g filter="url(#sb)">
<path d="M976.5 523.5l5-1.5q12 38 31 68l-6.5 4q-18-32-29.5-70.5z" fill="#a3b99d"/>
<path d="M979.5 524q12 37 30 67" fill="none" stroke="#70907a" stroke-width="2" stroke-dasharray="2.5 3.5"/>
<g filter="url(#rg)">
<path d="M1150 640q-3-30 6-50 6-12 15-17v67q-10 4-21 0z" fill="#5fa971"/>
<path d="M1157 630q2-28 14-50v55z" fill="#74b984"/>
<path d="M1102 662q4-13 14-17 10-2 20 1 18-4 35-1v52q-16-14-30-31-18-2-31 8-6-4-8-12z" fill="url(#lg2)"/>
<path d="M1092 630q4-18 22-27 16-6 30 2 10 8 13 26-10-6-24-8-22-2-37 12z" fill="url(#lg3)"/>
<path d="M1048 611q3-12 16-12 16 0 22 12 2 8-1 16-6-8-16-8-10-2-21-8z" fill="#8ac78f"/>
<path d="M916.5 738.5Q926 712 946 690Q968 666 996 660.5Q1018 657 1030 666.5Q1038 676 1040 690Q1024 699 1006 700.5Q978 703 953 714Q932 725 916.5 738.5Z" fill="url(#lg1)"/><path d="M1002 699q-6 10-8 18 10-4 16-14z" fill="#7fc088"/>
<path d="M1004 690q12-14 28-16 8 8 8 22-6 12-18 18-14-4-18-24z" fill="#8fcc94"/>
<path d="M1042 700q6-14 22-17 18 4 25 18 4 18 0 37.5h-34q-14-16-13-38.5z" fill="#78ba84"/>
<path d="M1052 690q14-6 30 6 6 16 4 42" fill="none" stroke="#5fa56d" stroke-width="1.5"/>
</g>
<path d="M1087.5 622q2 58 0 116.5h7q2-58-1-116.5z" fill="#8bc48d"/>
<path d="M1091 632q8-16 22-20" fill="none" stroke="#82bf88" stroke-width="3"/>
<path d="M1093 706q4-32 16-50" fill="none" stroke="#76b680" stroke-width="3.5"/>
<path d="M1018 702q20 12 34 36.5" fill="none" stroke="#6eb079" stroke-width="4.5"/>
<path d="M1036 684q10 2 18 -6" fill="none" stroke="#5a9a66" stroke-width="3"/>
<circle cx="1021" cy="598" r="10" fill="#5a3fc4"/><circle cx="1033" cy="609" r="11" fill="#4f35b6"/><circle cx="1027" cy="621" r="9.5" fill="#4a31ad"/><circle cx="1040" cy="627" r="11" fill="#5a40c6"/><circle cx="1035" cy="641" r="10" fill="#4530a6"/><circle cx="1050" cy="645" r="11" fill="#573cc0"/><circle cx="1046" cy="658" r="9" fill="#3f2b9c"/><circle cx="1059" cy="660" r="11.5" fill="#5b41c8"/><circle cx="1063" cy="674" r="10" fill="#4c34b4"/><circle cx="1071" cy="667" r="7.5" fill="#5238ba"/><circle cx="1052" cy="672" r="7" fill="#3d2a98"/><circle cx="1022" cy="597" r="3" fill="#a99be6"/><circle cx="1035" cy="608" r="2.5" fill="#8f80dc"/><circle cx="1027" cy="623" r="2.8" fill="#9a8be0"/><circle cx="1061" cy="664" r="3" fill="#a99be6"/><circle cx="1017" cy="592" r="5" fill="#6f56d4"/><circle cx="1043" cy="623" r="5" fill="#6b52d0"/><circle cx="1064" cy="655" r="5" fill="#6a50cf"/>
<path d="M1040 634q8 14 16 24" stroke="#8fae8c" stroke-width="3" fill="none"/>
</g></svg></div>
<div style="left:1248.5px;top:170px;width:17px;height:604px;background:#f6f6f6"></div>
<svg style="left:1254px;top:173px" width="10" height="8" viewBox="0 0 10 8"><path d="M1 7l4-5.5 4 5.5z" fill="#777"/></svg>
<div style="left:1255.2px;top:183.8px;width:6.8px;height:15px;border-radius:3.4px;background:#767676"></div>
<svg style="left:1253.5px;top:745px" width="10" height="8" viewBox="0 0 10 8"><path d="M1 1l4 5.5 4-5.5z" fill="#555"/></svg>
<div style="left:0;top:774px;width:1265px;height:28px;background:#f6f6f6"></div><span class="t" style="left:14px;top:785.5px;font-size:9px;color:#444">Slide 1 of 43</span><svg style="left:115px;top:783px" width="12" height="13" viewBox="0 0 12 13" ><circle cx="6" cy="2.5" r="1.6" fill="none" stroke="#444" stroke-width=".9"/><path d="M1 4.5l5 1.5 5-1.5 M6 6v2.5l-3 4 M6 8.5l1.5 1.5 M7 9l4 3.5 M7.5 12.5l3.5-3.5" fill="none" stroke="#444" stroke-width=".9"/></svg><span class="t" style="left:130px;top:785.5px;font-size:8.9px;font-weight:bold;color:#333;-webkit-text-stroke:.15px #333">Accessibility: Good to go</span><svg style="left:867.5px;top:783.5px" width="13" height="11" viewBox="0 0 13 11" ><path d="M4 3l2.5-2 2.5 2 M.5 5.5h12 M.5 8h12 M.5 10.5h12" fill="none" stroke="#444" stroke-width=".9"/></svg><span class="t" style="left:883px;top:785px;font-size:9.2px;color:#333">Notes</span><div style="left:930px;top:775px;width:36px;height:27px;background:#e7e7e7"></div><svg style="left:941.5px;top:784px" width="13" height="11" viewBox="0 0 13 11" ><rect x=".500" y=".500" width="12" height="10" fill="none" stroke="#444" stroke-width="1"/><path d="M3.5 .5v10 M5.5 3h5v3h-5z M5.5 8h5" fill="none" stroke="#444" stroke-width=".9"/></svg><svg style="left:978px;top:784px" width="13" height="11" viewBox="0 0 13 11" ><g fill="none" stroke="#444" stroke-width="1"><rect x=".500" y=".500" width="4.5" height="3.8"/><rect x="8" y=".500" width="4.5" height="3.8"/><rect x=".500" y="6.7" width="4.5" height="3.8"/><rect x="8" y="6.7" width="4.5" height="3.8"/></g></svg><svg style="left:1015px;top:783.5px" width="12" height="11" viewBox="0 0 12 11" ><path d="M.5 1h4.5l1 1 1-1h4.5v9h-4.5l-1 1-1-1h-4.5z M6 2v9 M2 3.5h2.5 M2 5.5h2.5 M2 7.5h2.5 M7.5 3.5h2.5 M7.5 5.5h2.5 M7.5 7.5h2.5" fill="none" stroke="#444" stroke-width=".8"/></svg><svg style="left:1051.5px;top:783px" width="12" height="12" viewBox="0 0 12 12" ><path d="M.5 1h11 M1.5 1v6h9v-6 M6 7v3.5 M3.5 11h5 M4 3h4v2h-4z" fill="none" stroke="#444" stroke-width=".9"/></svg><div style="left:1084px;top:789.5px;width:5px;height:1px;background:#666"></div><div style="left:1095px;top:789.5px;width:86px;height:1px;background:#888"></div><div style="left:1138px;top:787px;width:1px;height:6px;background:#888"></div><div style="left:1115.5px;top:784.5px;width:3.5px;height:11px;background:#444"></div><div style="left:1187px;top:789.5px;width:6px;height:1px;background:#666"></div><div style="left:1189.5px;top:787px;width:1px;height:6px;background:#666"></div><span class="t" style="left:1210px;top:786px;font-size:8.3px;color:#555">55%</span><svg style="left:1246px;top:782.5px" width="13" height="13" viewBox="0 0 13 13" ><rect x="4" y="4" width="5" height="5" fill="none" stroke="#333" stroke-width="1"/><path d="M4.5 2l2-1.5 2 1.5 M4.5 11l2 1.5 2-1.5 M2 4.5l-1.5 2 1.5 2 M11 4.5l1.5 2-1.5 2" fill="none" stroke="#333" stroke-width="1"/></svg><div style="left:1146px;top:737px;width:45px;height:45px;border-radius:50%;background:rgba(0,0,0,.04)"></div>
<div style="left:1201px;top:737px;width:45px;height:45px;border-radius:50%;background:rgba(0,0,0,.04)"></div>
<svg style="left:1158px;top:750px" width="21" height="21" viewBox="0 0 21 21" fill="none" stroke="#f7f7f7" stroke-width="2"><circle cx="9" cy="9" r="5.5"/><path d="M13 13l5.5 5.5 M6.5 9h5 M9 6.5v5"/></svg>
<svg style="left:1213px;top:750px" width="21" height="21" viewBox="0 0 21 21" fill="none" stroke="#f7f7f7" stroke-width="2"><path d="M4 17l13-13 M11 4h6v6 M4 11v6h6"/></svg>
</div><span class="t" style="left:9px;top:841.2px;font-size:14.7px;font-weight:bold;color:#fff;letter-spacing:-.55px">14:15</span><div style="left:57px;top:841px;width:1px;height:16px;background:#c8c8c8"></div><span class="t" style="left:69.5px;top:841px;font-size:15px;color:#fff;letter-spacing:.15px;transform:scaleX(1.19);transform-origin:0 0;-webkit-text-stroke:.35px #fff">dtb-iyub-gmv</span><div style="left:658px;top:825px;width:88px;height:48px;border-radius:14px;background:#601410"></div><div style="left:698px;top:825px;width:48px;height:48px;border-radius:13px;background:#f9dedc"></div><svg style="left:673.5px;top:844.5px" width="14" height="9" viewBox="0 0 14 9" ><path d="M2 7l5-5 5 5" fill="none" stroke="#fbe4e1" stroke-width="2.2"/></svg><svg style="left:710px;top:837px" width="24" height="24" viewBox="0 0 24 24" ><path d="M19 11h-1.7c0 .74-.16 1.43-.43 2.05l1.23 1.23c.56-.98.9-2.09.900-3.28zm-4.02.17c0-.06.02-.11.02-.17V5c0-1.66-1.34-3-3-3S9 3.34 9 5v.180l5.98 5.99zM4.27 3L3 4.27l6.01 6.01V11c0 1.66 1.33 3 2.99 3 .22 0 .44-.03.65-.08l1.66 1.66c-.71.33-1.5.520-2.31.520-2.76 0-5.3-2.1-5.3-5.1H5c0 3.41 2.72 6.23 6 6.72V21h2v-3.28c.91-.13 1.77-.45 2.54-.90L19.73 21 21 19.73 4.27 3z" fill="#5c1410"/></svg><div style="left:754px;top:825px;width:88px;height:48px;border-radius:14px;background:#601410"></div><div style="left:794px;top:825px;width:48px;height:48px;border-radius:13px;background:#f9dedc"></div><svg style="left:769.5px;top:844.5px" width="14" height="9" viewBox="0 0 14 9" ><path d="M2 7l5-5 5 5" fill="none" stroke="#fbe4e1" stroke-width="2.2"/></svg><svg style="left:805px;top:836px" width="26" height="26" viewBox="0 0 24 24" ><path d="M9.56 8l-2-2-4.15-4.14L2 3.27 4.73 6H4c-.55 0-1 .45-1 1v10c0 .55.45 1 1 1h12c.21 0 .39-.08.55-.18L19.73 21l1.41-1.41-8.86-8.86L9.56 8zM5 16V8h1.73l8 8H5zm10-8v2.61l6 6V6.5l-4 4V7c0-.55-.45-1-1-1h-5.61l2 2H15z" fill="#5c1410"/></svg><div class="mb" style="left:850.5px;width:55.5px"></div><div class="mb" style="left:914px;width:56px"></div><div class="mb" style="left:978px;width:56px"></div><div class="mb" style="left:1042px;width:56px"></div><div class="mb" style="left:1106px;width:36px"></div><svg style="left:866px;top:837px" width="24" height="24" viewBox="0 0 24 24" ><path d="M20 18c1.1 0 1.99-.9 1.99-2L22 6c0-1.11-.9-2-2-2H4c-1.11 0-2 .89-2 2v10c0 1.1.89 2 2 2H0v2h24v-2h-4zM4 16V6h16v10.01L4 16zm9-6.87V7l4 3.5-4 3.5v-2.1c-2.78 0-4.61.85-6 2.73.56-2.67 2.11-5.33 6-5.5z" fill="none"/><path d="M3 5h18v12H3z M1 20h22" fill="none" stroke="#e3e3e3" stroke-width="2"/><path d="M12 8l-3.5 3.5h2.3v3h2.4v-3h2.3z" fill="#e3e3e3"/></svg><svg style="left:930px;top:837px" width="24" height="24" viewBox="0 0 24 24" ><circle cx="12" cy="12" r="9" fill="none" stroke="#e3e3e3" stroke-width="2"/><circle cx="8.5" cy="9.5" r="1.5" fill="#e3e3e3"/><circle cx="15.5" cy="9.5" r="1.5" fill="#e3e3e3"/><path d="M6.8 13.5h10.4c-.6 2.5-2.7 4.2-5.2 4.2s-4.6-1.7-5.2-4.2z" fill="#e3e3e3"/></svg><svg style="left:994px;top:837px" width="24" height="24" viewBox="0 0 24 24" ><rect x="3" y="5" width="18" height="14" rx="1" fill="none" stroke="#e3e3e3" stroke-width="2"/><path d="M11 10.5v-.5h-3v4h3v-.5 M16.5 10.5v-.5h-3v4h3v-.5" fill="none" stroke="#e3e3e3" stroke-width="1.6"/></svg><svg style="left:1058px;top:836px" width="24" height="26" viewBox="0 -1 24 26" ><path d="M21 7c0-1.38-1.12-2.5-2.5-2.5-.17 0-.34.02-.5.05V4c0-1.38-1.12-2.5-2.5-2.5-.23 0-.46.03-.67.09C14.46.66 13.56 0 12.5 0c-1.23 0-2.25.89-2.46 2.06C9.87 2.02 9.69 2 9.5 2 8.12 2 7 3.12 7 4.5v5.89c-.34-.31-.76-.54-1.22-.66L5.01 9.52c-.83-.23-1.7.09-2.19.83-.38.57-.4 1.31-.15 1.95l2.56 6.43C6.49 21.91 9.57 24 13 24h0c4.42 0 8-3.58 8-8V7zm-2 9c0 3.31-2.69 6-6 6h0c-2.61 0-4.95-1.59-5.91-4.01l-2.6-6.54 1.22.33 2.29 3.22h1V4.5c0-.28.22-.5.5-.5s.5.22.5.5V12h2V2.5c0-.28.22-.5.5-.5s.5.22.5.5V12h2V4c0-.28.22-.5.5-.5s.5.22.5.5v8h2V7c0-.28.22-.5.5-.5s.5.22.5.5v9z" fill="#e3e3e3"/></svg><svg style="left:1121px;top:839px" width="6" height="20" viewBox="0 0 6 20" ><circle cx="3" cy="3" r="2" fill="#e3e3e3"/><circle cx="3" cy="10" r="2" fill="#e3e3e3"/><circle cx="3" cy="17" r="2" fill="#e3e3e3"/></svg><div style="left:1150px;top:825px;width:72px;height:48px;border-radius:24px;background:#dc362e"></div><svg style="left:1173px;top:836px" width="26" height="26" viewBox="0 0 24 24" ><path d="M12 9c-1.6 0-3.15.25-4.6.72v3.1c0 .39-.23.74-.56.9-.98.49-1.87 1.12-2.66 1.85-.18.18-.43.28-.7.28-.28 0-.53-.11-.71-.29L.29 13.08c-.18-.17-.29-.42-.29-.70 0-.28.11-.53.29-.71C3.34 8.78 7.46 7 12 7s8.66 1.78 11.71 4.67c.18.18.29.43.29.71 0 .28-.11.53-.29.71l-2.48 2.48c-.18.18-.43.29-.71.29-.27 0-.52-.11-.70-.28-.79-.74-1.69-1.36-2.67-1.85-.33-.16-.56-.5-.56-.9v-3.1C15.15 9.25 13.6 9 12 9z" fill="#fff"/></svg><svg style="left:1704px;top:837px" width="24" height="24" viewBox="0 0 24 24" ><circle cx="12" cy="12" r="9" fill="none" stroke="#fff" stroke-width="2"/><path d="M12 11v6" stroke="#fff" stroke-width="2"/><circle cx="12" cy="8" r="1.2" fill="#fff"/></svg><svg style="left:1751.5px;top:837px" width="24" height="24" viewBox="0 0 24 24" ><path d="M9 13.75c-2.34 0-7 1.17-7 3.5V19h14v-1.75c0-2.33-4.66-3.5-7-3.5zM4.34 17c.84-.58 2.87-1.25 4.66-1.25s3.82.67 4.66 1.25H4.34zM9 12c1.93 0 3.5-1.57 3.5-3.5S10.93 5 9 5 5.5 6.57 5.5 8.5 7.07 12 9 12zm0-5c.83 0 1.5.67 1.5 1.5S9.83 10 9 10s-1.5-.67-1.5-1.5S8.17 7 9 7zm7.04 6.81c1.16.84 1.96 1.96 1.96 3.44V19h4v-1.75c0-2.02-3.5-3.17-5.96-3.44zM15 12c1.93 0 3.5-1.57 3.5-3.5S16.93 5 15 5c-.54 0-1.04.13-1.5.35.63.89 1 1.98 1 3.15s-.37 2.26-1 3.15c.46.22.96.35 1.5.35z" fill="#fff"/></svg><div style="left:1764px;top:816px;width:27px;height:19px;border-radius:9.5px;background:#5f6368"></div><span class="t" style="left:1764px;top:820.5px;width:27px;text-align:center;font-size:11px;font-weight:bold;color:#fff">10</span><svg style="left:1800px;top:837.5px" width="24" height="24" viewBox="0 0 24 24" ><path d="M4 4h16v12H5.17L4 17.17V4m0-2c-1.1 0-1.99.9-1.99 2L2 22l4-4h14c1.1 0 2-.9 2-2V4c0-1.1-.9-2-2-2H4zm2 10h8v2H6v-2zm0-3h12v2H6V9zm0-3h12v2H6V6z" fill="#fff"/></svg><svg style="left:1849px;top:838px" width="22" height="22" viewBox="0 0 22 22" ><circle cx="4" cy="4" r="2.3" fill="#fff"/><circle cx="4" cy="11" r="2.3" fill="#fff"/><circle cx="4" cy="18" r="2.3" fill="#fff"/><circle cx="11" cy="4" r="2.3" fill="#fff"/><circle cx="11" cy="11" r="2.3" fill="#fff"/><circle cx="11" cy="18" r="2.3" fill="#fff"/><circle cx="18" cy="4" r="2.3" fill="#fff"/><circle cx="18" cy="11" r="2.3" fill="#fff"/><circle cx="18" cy="18" r="2.3" fill="#fff"/></svg><div class="tile" style="left:1282px;top:14px;background:radial-gradient(ellipse 78% 68% at 50% 45%,#6b3a25 0%,#5f3321 55%,#4f2a1b 100%)"><div class="av" style="background:#8d6e63"></div>
<div style="left:34px;top:106px;width:124px;height:43.5px;border-radius:22px;background:rgba(32,33,36,.54)"></div>
<svg style="left:86.7px;top:118px" width="20" height="20" viewBox="0 0 24 24" opacity=".55"><path d="M19 11h-1.7c0 .74-.16 1.43-.43 2.05l1.23 1.23c.56-.98.9-2.09.900-3.28zm-4.02.17c0-.06.02-.11.02-.17V5c0-1.66-1.34-3-3-3S9 3.34 9 5v.180l5.98 5.99zM4.27 3L3 4.27l6.01 6.01V11c0 1.66 1.33 3 2.99 3 .22 0 .44-.03.65-.08l1.66 1.66c-.71.33-1.5.520-2.31.520-2.76 0-5.3-2.1-5.3-5.1H5c0 3.41 2.72 6.23 6 6.72V21h2v-3.28c.91-.13 1.77-.45 2.54-.90L19.73 21 21 19.73 4.27 3z" fill="#d8d0cc"/></svg>
<div class="avl" style="left:60.7px;top:92px;color:rgba(225,220,216,.62);font-size:38px">S</div>
<svg style="left:44px;top:119.5px" width="20" height="20" viewBox="0 0 24 24"><path d="M14 4v5c0 1.12.37 2.16 1 3H9c.65-.86 1-1.9 1-3V4h4m3-2H7c-.55 0-1 .45-1 1s.45 1 1 1h1v5c0 1.66-1.34 3-3 3v2h5.97v7l1 1 1-1v-7H19v-2c-1.66 0-3-1.34-3-3V4h1c.55 0 1-.45 1-1s-.45-1-1-1z" fill="#e3e3e3"/></svg>
<svg style="left:135px;top:119px" width="6" height="18" viewBox="0 0 6 18"><circle cx="3" cy="3" r="2" fill="#e3e3e3"/><circle cx="3" cy="9" r="2" fill="#e3e3e3"/><circle cx="3" cy="15" r="2" fill="#e3e3e3"/></svg><span class="nm">Sơn (KHCN) Nguyễ...</span></div><div class="tile" style="left:1484.5px;top:14px;background:radial-gradient(ellipse 78% 68% at 50% 48%,#0b5e55 0%,#09524a 52%,#073d38 100%)"><div class="av" style="background:#00897b"></div><div class="avl" style="left:60.7px;top:92px">T</div><span class="nm">Thanh Nguyễn Văn</span></div><div class="tile" style="left:1688px;top:14px;background:radial-gradient(ellipse 78% 68% at 50% 48%,#8a3510 0%,#7a2e10 52%,#62230e 100%);box-shadow:inset 0 0 0 3px #f8b6a6"><div class="av" style="background:#f4511e"></div><div class="avl" style="left:60.7px;top:92px">G</div><span class="nm">Giang (KHCN) Bạch...</span></div><div class="tile" style="left:1282px;top:281px;background:#bfb9ae"><svg style="left:0;top:0" width="192" height="255" viewBox="0 0 192 255">
<defs><filter id="fb" x="-20%" y="-20%" width="140%" height="140%"><feGaussianBlur stdDeviation="4.5"/></filter><filter id="fb2" x="-20%" y="-20%" width="140%" height="140%"><feGaussianBlur stdDeviation="2.6"/></filter>
<linearGradient id="wall" x1="0" y1="0" x2="1" y2="1"><stop offset="0" stop-color="#c2c6b1"/><stop offset="1" stop-color="#d6d6cb"/></linearGradient></defs>
<rect width="192" height="255" fill="url(#wall)"/>
<g filter="url(#fb)">
<path d="M40 34h132q22 10 26 60v70h-20l-150 95h-40v-150q2-40 18-56 14-16 34-19z" fill="#66606d"/>
<path d="M52 36q50-10 116 0l-4 26q-56-12-104 4z" fill="#9f99a6"/>
<path d="M-8 160q2-56 22-84l18 6q-16 44-12 100l4 80h-32z" fill="#4f4a57"/>
<ellipse cx="114" cy="170" rx="88" ry="108" fill="#cbaca4"/>
<ellipse cx="106" cy="100" rx="60" ry="30" fill="#d6bab1"/>
<ellipse cx="62" cy="192" rx="26" ry="30" fill="#cdaaa3"/>
<ellipse cx="164" cy="188" rx="26" ry="34" fill="#cba6a0"/>
<path d="M198 50v96q-10-20-13-44-4-30-12-50z" fill="#69626e"/>
<path d="M20 110q-6 60 4 150h-30v-150z" fill="#4c4754"/>
</g>
<g filter="url(#fb2)">
<path d="M46 133q24-10 50-5" stroke="#6b5358" stroke-width="7" fill="none"/>
<path d="M136 127q20-7 40-3" stroke="#6b5358" stroke-width="6.5" fill="none"/>
<path d="M50 152q18-5 36-1" stroke="#8a666d" stroke-width="5" fill="none"/>
<path d="M144 148q18-4 34-1" stroke="#8a666d" stroke-width="5" fill="none"/>
<ellipse cx="124" cy="207" rx="28" ry="7" fill="#a67b79"/>
<ellipse cx="122" cy="180" rx="17" ry="19" fill="#d6aea6"/>
<path d="M76 244q50 12 110-8v24h-110z" fill="#8d6f73"/>
<ellipse cx="100" cy="17" rx="9" ry="4" fill="#e9e9e2"/>
</g></svg><span class="nm">Thư (K.DUOC) Ngô ...</span></div><div class="tile" style="left:1484.5px;top:281px;background:radial-gradient(ellipse 78% 68% at 50% 50%,#7e270e 0%,#74230d 52%,#5f1d0e 100%)"><div class="av" style="background:#d33f12"></div><div class="avl" style="left:60.7px;top:92px">T</div><div style="left:158.3px;top:7.5px;width:25px;height:25px;border-radius:50%;background:#6a1e12"></div><svg style="left:162.8px;top:12px" width="16" height="16" viewBox="0 0 24 24"><path d="M19 11h-1.7c0 .74-.16 1.43-.43 2.05l1.23 1.23c.56-.98.9-2.09.900-3.28zm-4.02.17c0-.06.02-.11.02-.17V5c0-1.66-1.34-3-3-3S9 3.34 9 5v.180l5.98 5.99zM4.27 3L3 4.27l6.01 6.01V11c0 1.66 1.33 3 2.99 3 .22 0 .44-.03.65-.08l1.66 1.66c-.71.33-1.5.520-2.31.520-2.76 0-5.3-2.1-5.3-5.1H5c0 3.41 2.72 6.23 6 6.72V21h2v-3.28c.91-.13 1.77-.45 2.54-.90L19.73 21 21 19.73 4.27 3z" fill="#f3d6d0"/></svg><span class="nm">Tham Pham</span></div><div class="tile" style="left:1688px;top:281px;background:radial-gradient(ellipse 78% 68% at 50% 50%,#33439b 0%,#2f3e8f 52%,#273378 100%)"><div class="av" style="background:#5c6bc0"></div>
<div style="left:34px;top:106px;width:124px;height:43.5px;border-radius:22px;background:rgba(32,33,36,.54)"></div>
<svg style="left:86.7px;top:118px" width="20" height="20" viewBox="0 0 24 24" opacity=".55"><path d="M19 11h-1.7c0 .74-.16 1.43-.43 2.05l1.23 1.23c.56-.98.9-2.09.900-3.28zm-4.02.17c0-.06.02-.11.02-.17V5c0-1.66-1.34-3-3-3S9 3.34 9 5v.180l5.98 5.99zM4.27 3L3 4.27l6.01 6.01V11c0 1.66 1.33 3 2.99 3 .22 0 .44-.03.65-.08l1.66 1.66c-.71.33-1.5.520-2.31.520-2.76 0-5.3-2.1-5.3-5.1H5c0 3.41 2.72 6.23 6 6.72V21h2v-3.28c.91-.13 1.77-.45 2.54-.90L19.73 21 21 19.73 4.27 3z" fill="#8e99dd"/></svg>
<div class="avl" style="left:60.7px;top:92px;color:rgba(225,222,205,.72);font-size:38px">Y</div>
<svg style="left:44px;top:119.5px" width="20" height="20" viewBox="0 0 24 24"><path d="M14 4v5c0 1.12.37 2.16 1 3H9c.65-.86 1-1.9 1-3V4h4m3-2H7c-.55 0-1 .45-1 1s.45 1 1 1h1v5c0 1.66-1.34 3-3 3v2h5.97v7l1 1 1-1v-7H19v-2c-1.66 0-3-1.34-3-3V4h1c.55 0 1-.45 1-1s-.45-1-1-1z" fill="#e3e3e3"/></svg>
<svg style="left:135px;top:119px" width="6" height="18" viewBox="0 0 6 18"><circle cx="3" cy="3" r="2" fill="#e3e3e3"/><circle cx="3" cy="9" r="2" fill="#e3e3e3"/><circle cx="3" cy="15" r="2" fill="#e3e3e3"/></svg><div style="left:158.3px;top:7.5px;width:25px;height:25px;border-radius:50%;background:#2438a0"></div><svg style="left:162.8px;top:12px" width="16" height="16" viewBox="0 0 24 24"><path d="M19 11h-1.7c0 .74-.16 1.43-.43 2.05l1.23 1.23c.56-.98.9-2.09.900-3.28zm-4.02.17c0-.06.02-.11.02-.17V5c0-1.66-1.34-3-3-3S9 3.34 9 5v.180l5.98 5.99zM4.27 3L3 4.27l6.01 6.01V11c0 1.66 1.33 3 2.99 3 .22 0 .44-.03.65-.08l1.66 1.66c-.71.33-1.5.520-2.31.520-2.76 0-5.3-2.1-5.3-5.1H5c0 3.41 2.72 6.23 6 6.72V21h2v-3.28c.91-.13 1.77-.45 2.54-.90L19.73 21 21 19.73 4.27 3z" fill="#dfe3f7"/></svg><span class="nm">Yến (K.DUOC) Ngu...</span></div><div class="tile" style="left:1282px;top:548px;background:radial-gradient(ellipse 78% 68% at 50% 48%,#0e5348 0%,#0c463d 52%,#0a3732 100%)"><div class="av" style="background:#0a5143;box-shadow:0 0 6px rgba(0,40,30,.18)"></div><div class="avl" style="left:60.7px;top:92px">H</div><div style="left:158.3px;top:7.5px;width:25px;height:25px;border-radius:50%;background:rgba(0,0,0,.07)"></div><svg style="left:162.8px;top:12px" width="16" height="16" viewBox="0 0 24 24"><path d="M19 11h-1.7c0 .74-.16 1.43-.43 2.05l1.23 1.23c.56-.98.9-2.09.900-3.28zm-4.02.17c0-.06.02-.11.02-.17V5c0-1.66-1.34-3-3-3S9 3.34 9 5v.180l5.98 5.99zM4.27 3L3 4.27l6.01 6.01V11c0 1.66 1.33 3 2.99 3 .22 0 .44-.03.65-.08l1.66 1.66c-.71.33-1.5.520-2.31.520-2.76 0-5.3-2.1-5.3-5.1H5c0 3.41 2.72 6.23 6 6.72V21h2v-3.28c.91-.13 1.77-.45 2.54-.90L19.73 21 21 19.73 4.27 3z" fill="#9fe0cf"/></svg><span class="nm">Hiền (K.DUOC) Ngu...</span></div><div class="tile" style="left:1484.5px;top:548px;background:radial-gradient(ellipse 78% 68% at 50% 48%,#673823 0%,#5c321f 52%,#4c291a 100%)"><div class="av" style="background:#8d6e63"></div><div class="avl" style="left:60.7px;top:92px">S</div><div style="left:158.3px;top:7.5px;width:25px;height:25px;border-radius:50%;background:#7a2410"></div><svg style="left:162.8px;top:12px" width="16" height="16" viewBox="0 0 24 24"><path d="M19 11h-1.7c0 .74-.16 1.43-.43 2.05l1.23 1.23c.56-.98.9-2.09.900-3.28zm-4.02.17c0-.06.02-.11.02-.17V5c0-1.66-1.34-3-3-3S9 3.34 9 5v.180l5.98 5.99zM4.27 3L3 4.27l6.01 6.01V11c0 1.66 1.33 3 2.99 3 .22 0 .44-.03.65-.08l1.66 1.66c-.71.33-1.5.520-2.31.520-2.76 0-5.3-2.1-5.3-5.1H5c0 3.41 2.72 6.23 6 6.72V21h2v-3.28c.91-.13 1.77-.45 2.54-.90L19.73 21 21 19.73 4.27 3z" fill="#f5c9c0"/></svg><span class="nm">Sơn (KHCN) Nguyễ...</span></div><div class="tile" style="left:1688px;top:548px;background:radial-gradient(ellipse 78% 68% at 50% 48%,#47625f 0%,#3d5956 52%,#304a48 100%)"><svg style="left:59.7px;top:91.3px" width="72" height="72" viewBox="0 0 72 72"><defs><clipPath id="vc"><circle cx="36" cy="36" r="36"/></clipPath><filter id="vb"><feGaussianBlur stdDeviation=".55"/></filter></defs>
<g clip-path="url(#vc)"><rect width="72" height="72" fill="#e4eff4"/><g filter="url(#vb)">
<path d="M23 22q-1-20 14-21 15 1 13.5 21 0 6-3 9.5l-6-2h-9l-6 2q-3.5-4-3.5-9.5z" fill="#3a2f2d"/>
<rect x="32.5" y="27" width="8" height="10" fill="#dcb096"/>
<ellipse cx="36.5" cy="20" rx="8.6" ry="10.5" fill="#e2b89f"/>
<path d="M27.5 17q3-7 9-7.5 6 .5 9 7.5-2-3-5-4-4 3-8 2.5-3 0-5 1.5z" fill="#3f3330"/>
<path d="M29 19.5h6.5 M37.5 19.5h6.5" stroke="#7a6258" stroke-width=".7" fill="none"/>
<path d="M32.5 25.5q4 2.5 8 0" stroke="#c27a72" stroke-width="1" fill="none"/>
<path d="M11 66q-2-22 6-28 8-4 15-5l4.5 4 4.5-4q8 1 15 5 8 6 6 28z" fill="#ecbfd3"/>
<path d="M29.5 34l7 15 7-15q-7 3-14 0z" fill="#dfb297"/>
<path d="M28.5 34l8 17-13-10z M44.5 34l-8 17 13-10z" fill="#e4aec6"/>
<path d="M24 41l5 1 M49 41l-5 1" stroke="#c98aa6" stroke-width=".8"/>
<path d="M12 62q24 8 50-1v11h-50z" fill="#dfb297"/>
</g></g></svg><div style="left:158.3px;top:7.5px;width:25px;height:25px;border-radius:50%;background:#0e4a44"></div><svg style="left:162.8px;top:12px" width="16" height="16" viewBox="0 0 24 24"><path d="M19 11h-1.7c0 .74-.16 1.43-.43 2.05l1.23 1.23c.56-.98.9-2.09.900-3.28zm-4.02.17c0-.06.02-.11.02-.17V5c0-1.66-1.34-3-3-3S9 3.34 9 5v.180l5.98 5.99zM4.27 3L3 4.27l6.01 6.01V11c0 1.66 1.33 3 2.99 3 .22 0 .44-.03.65-.08l1.66 1.66c-.71.33-1.5.520-2.31.520-2.76 0-5.3-2.1-5.3-5.1H5c0 3.41 2.72 6.23 6 6.72V21h2v-3.28c.91-.13 1.77-.45 2.54-.90L19.73 21 21 19.73 4.27 3z" fill="#8fe0d2"/></svg><span class="nm">Vy (K.DUOC) Phan ...</span></div></div></body></html>
